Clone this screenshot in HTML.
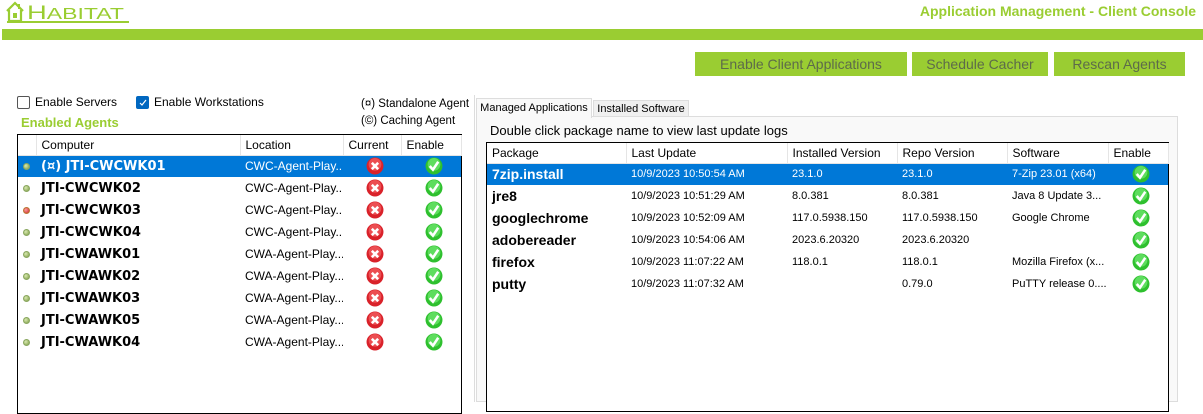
<!DOCTYPE html>
<html><head><meta charset="utf-8"><style>
*{margin:0;padding:0;box-sizing:border-box}
body{width:1203px;height:402px;background:#fff;position:relative;overflow:hidden;font-family:"Liberation Sans",sans-serif;font-size:12px;color:#000}
.a{position:absolute}
.btn{position:absolute;top:52px;height:24px;background:#9acd32;color:#5d6b4a;font-size:14px;text-align:center;line-height:24px}
.cb{position:absolute;width:13px;height:13px;border:1px solid #555;border-radius:2px;background:#fff}
table{border-collapse:collapse;position:absolute;table-layout:fixed}
td,th{white-space:nowrap;overflow:hidden;padding:0 0 0 5px;text-align:left;font-weight:normal}
th{height:20px;border-right:1px solid #e5e5e5;border-bottom:1px solid #e5e5e5;font-size:12px}
td{height:22px}
.sel td{background:#0078d7;color:#fff}
.nm{font-family:"DejaVu Sans",sans-serif;font-weight:bold;font-size:13px}
.pk{font-weight:bold;font-size:14px}
.dot{display:inline-block;width:7px;height:7px;border-radius:50%;background:radial-gradient(circle at 35% 35%,#d8eab0,#7c9a45);border:1px solid #8aa760}
.red{background:radial-gradient(circle at 35% 35%,#ff9c9c,#c8262a);border-color:#b73}
.ic{display:block;margin:0 auto}
</style></head><body>
<svg class="a" style="left:5px;top:1px" width="124" height="23" viewBox="0 0 124 23">
<path d="M2 10 L10 2 L18 10 M4 9 V20 H16 V9" fill="none" stroke="#9acd32" stroke-width="2.2"/>
<rect x="8" y="12" width="4" height="5" fill="#9acd32"/>
<rect x="13" y="3" width="2" height="5" fill="#9acd32"/>
<text x="22" y="18" font-family="Liberation Sans" font-size="19" fill="#9acd32" textLength="97" lengthAdjust="spacingAndGlyphs">H<tspan font-size="16">ABITAT</tspan></text>
<rect x="2" y="20" width="122" height="2" fill="#9acd32"/>
</svg>
<div class="a" style="right:7px;top:3px;color:#9acd32;font-weight:bold;font-size:14px">Application Management - Client Console</div>
<div class="a" style="left:2px;top:29px;width:1201px;height:11px;background:#9acd32"></div>
<div class="btn" style="left:695px;width:212px">Enable Client Applications</div>
<div class="btn" style="left:912px;width:136px">Schedule Cacher</div>
<div class="btn" style="left:1054px;width:131px">Rescan Agents</div>

<div class="cb" style="left:17px;top:96px"></div>
<div class="a" style="left:35px;top:95px">Enable Servers</div>
<div class="cb" style="left:136px;top:96px;background:#0067c0;border-color:#0067c0"><svg width="11" height="11" style="display:block"><path d="M3 6 L5 8 L9 3" stroke="#fff" stroke-width="1.2" fill="none"/></svg></div>
<div class="a" style="left:154px;top:95px">Enable Workstations</div>
<div class="a" style="left:361px;top:98px;font-size:11.5px">(¤) Standalone Agent</div>
<div class="a" style="left:361px;top:115px;font-size:11.5px">(©) Caching Agent</div>
<div class="a" style="left:21px;top:115px;color:#9acd32;font-weight:bold;font-size:13px">Enabled Agents</div>
<div class="a" style="left:474px;top:95px;width:1px;height:307px;background:#ddd"></div>

<div class="a" style="left:17px;top:134px;width:445px;height:280px;border:1px solid #000"></div>
<table style="left:18px;top:135px;width:443px">
<colgroup><col style="width:18px"><col style="width:204px"><col style="width:103px"><col style="width:58px"><col style="width:60px"></colgroup>
<tr><th></th><th>Computer</th><th>Location</th><th>Current</th><th>Enable</th></tr>
<tbody id="L"></tbody>
</table>

<div class="a" style="left:476px;top:116px;width:702px;height:286px;background:#f9f9f9;border:1px solid #ddd"></div>
<div class="a" style="left:476px;top:98px;width:116px;height:20px;background:#f9f9f9;border:1px solid #ddd;border-bottom:none;font-size:11px;line-height:19px;text-align:center">Managed Applications</div>
<div class="a" style="left:593px;top:100px;width:96px;height:17px;background:#f0f0f0;border:1px solid #ddd;font-size:11px;line-height:17px;text-align:center">Installed Software</div>
<div class="a" style="left:490px;top:123px;font-size:13px">Double click package name to view last update logs</div>
<div class="a" style="left:486px;top:142px;width:683px;height:270px;border:1px solid #000;background:#fff"></div>
<table style="left:487px;top:143px;width:681px">
<colgroup><col style="width:139px"><col style="width:161px"><col style="width:110px"><col style="width:110px"><col style="width:101px"><col style="width:60px"></colgroup>
<tr><th>Package</th><th>Last Update</th><th>Installed Version</th><th>Repo Version</th><th>Software</th><th>Enable</th></tr>
<tbody id="R"></tbody>
</table>
<script>
var ok='<svg class="ic" width="18" height="18" viewBox="0 0 17 17"><circle cx="8.5" cy="8.5" r="8" fill="#2ec02e"/><circle cx="8.5" cy="7" r="6" fill="#7ef07e" opacity=".6"/><path d="M4.5 8.5 L7.5 12 L12.5 4.5" stroke="#fff" stroke-width="2.4" fill="none"/></svg>';
var no='<svg class="ic" width="18" height="18" viewBox="0 0 17 17"><circle cx="8.5" cy="8.5" r="8" fill="#d9222a"/><circle cx="8.5" cy="7" r="6" fill="#ff7a7a" opacity=".5"/><path d="M5.5 5.5 L11.5 11.5 M11.5 5.5 L5.5 11.5" stroke="#fff" stroke-width="2.4"/></svg>';
var L=[["(¤) JTI-CWCWK01","CWC",0],["JTI-CWCWK02","CWC",0],["JTI-CWCWK03","CWC",1],["JTI-CWCWK04","CWC",0],["JTI-CWAWK01","CWA",0],["JTI-CWAWK02","CWA",0],["JTI-CWAWK03","CWA",0],["JTI-CWAWK05","CWA",0],["JTI-CWAWK04","CWA",0]];
var h='';L.forEach(function(r,i){h+='<tr'+(i==0?' class="sel"':'')+'><td><span class="dot'+(r[2]?' red':'')+'"></span></td><td class="nm">'+r[0]+'</td><td>'+r[1]+'-Agent-Play...</td><td>'+no+'</td><td>'+ok+'</td></tr>'});
document.getElementById('L').innerHTML=h;
var R=[["7zip.install","10/9/2023 10:50:54 AM","23.1.0","23.1.0","7-Zip 23.01 (x64)"],["jre8","10/9/2023 10:51:29 AM","8.0.381","8.0.381","Java 8 Update 3..."],["googlechrome","10/9/2023 10:52:09 AM","117.0.5938.150","117.0.5938.150","Google Chrome"],["adobereader","10/9/2023 10:54:06 AM","2023.6.20320","2023.6.20320",""],["firefox","10/9/2023 11:07:22 AM","118.0.1","118.0.1","Mozilla Firefox (x..."],["putty","10/9/2023 11:07:32 AM","","0.79.0","PuTTY release 0...."]];
h='';R.forEach(function(r,i){h+='<tr'+(i==0?' class="sel"':'')+'><td class="pk">'+r[0]+'</td><td style="font-size:11px">'+r[1]+'</td><td style="font-size:11px">'+r[2]+'</td><td style="font-size:11px">'+r[3]+'</td><td style="font-size:11px">'+r[4]+'</td><td>'+ok+'</td></tr>'});
document.getElementById('R').innerHTML=h;
</script>
</body></html>
